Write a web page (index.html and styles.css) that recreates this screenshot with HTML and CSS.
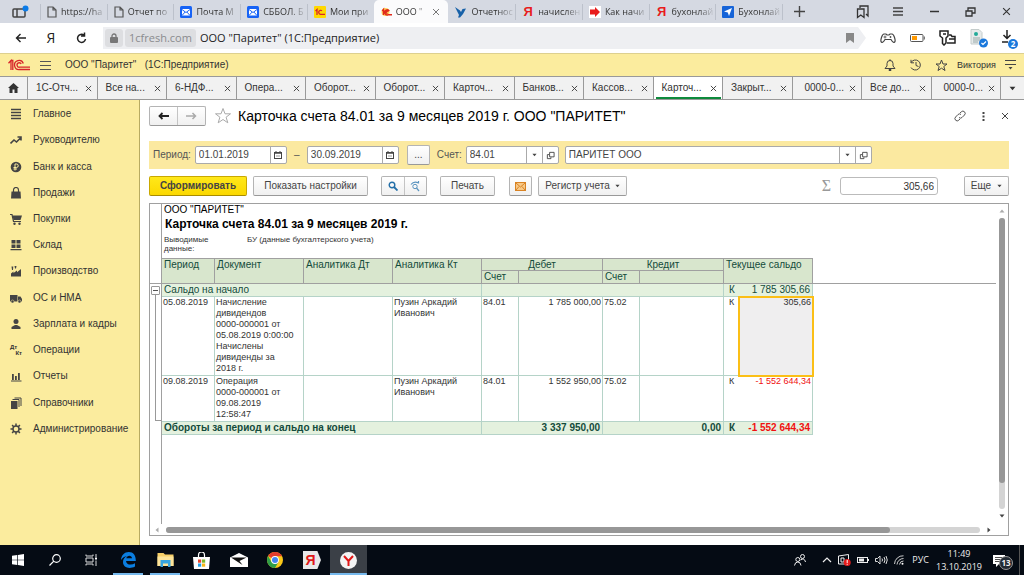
FILE: index.html
```html
<!DOCTYPE html>
<html lang="ru">
<head>
<meta charset="utf-8">
<title>ООО "Паритет" (1С:Предприятие)</title>
<link rel="stylesheet" href="styles.css">
</head>
<body>
<svg class="defs" aria-hidden="true">
  <symbol id="i-doc" viewBox="0 0 10 12"><path d="M1 1h5l3 3v7H1zM6 1v3h3" fill="none" stroke="#555" stroke-width="1.2"/></symbol>
  <symbol id="i-mail" viewBox="0 0 12 12"><rect width="12" height="12" rx="1.5" fill="#1763f6"/><rect x="2" y="3" width="8" height="6.5" fill="#fff"/><path d="M2 3.500l4 3 4-3M2 9.500l3-3.400M10 9.500L7 6.100" fill="none" stroke="#1763f6"/></symbol>
  <symbol id="i-1c" viewBox="0 0 22 12"><g fill="none" stroke="#d8232a" stroke-width="1.300"><path d="M0.500 4.200L3 1.500V11M2.800 1.500h2V11"/><path d="M15.300 4.500A4.500 4.500 0 1 0 11.500 10.500H22"/><path d="M13.200 5A2.200 2.200 0 1 0 11.500 8.200H22"/></g></symbol>
  <symbol id="i-x" viewBox="0 0 8 8"><path d="M1 1l6 6M7 1L1 7" fill="none" stroke="currentColor"/></symbol>
  <symbol id="i-down" viewBox="0 0 6 4"><path d="M0.500 0.500h5L3 3.500z" fill="currentColor"/></symbol>
  <symbol id="i-star" viewBox="0 0 18 18"><path d="M9 1.500l2 5.300h5.500l-4.400 3.400 1.700 5.600L9 12.500l-4.800 3.300 1.700-5.600L1.500 6.800H7z" fill="none" stroke="currentColor"/></symbol>
  <symbol id="i-cal" viewBox="0 0 8 8"><rect x=".5" y="1.500" width="7" height="6" fill="none" stroke="#444"/><path d="M0 2h8" stroke="#444" stroke-width="1.500"/><path d="M2 0v2M6 0v2" stroke="#444"/><path d="M2 5h4" stroke="#999"/></symbol>
  <symbol id="i-open" viewBox="0 0 10 10"><path d="M4 1.500h5v5H4zM3.500 4H1.500v4.500h4V7" fill="none" stroke="#444"/></symbol>
</svg>

<nav class="browser-tabs" aria-label="Вкладки браузера">
  <button class="panel-btn" aria-label="Табло"><svg width="17" height="14" viewBox="0 0 17 14"><rect x="1" y="4" width="12" height="8" rx="1" fill="none" stroke="#444" stroke-width="1.500"/><path d="M5 4v8" stroke="#444" stroke-width="1.500"/><circle cx="13.500" cy="3.500" r="3" fill="#0a7be8"/></svg></button>
  <div class="tab-strip">
    <button class="btab"><svg width="10" height="12"><use href="#i-doc"/></svg><span>https://ha</span></button>
    <button class="btab"><svg width="10" height="12"><use href="#i-doc"/></svg><span>Отчет по</span></button>
    <button class="btab"><svg width="12" height="12"><use href="#i-mail"/></svg><span>Почта М</span></button>
    <button class="btab"><svg width="12" height="12"><use href="#i-mail"/></svg><span>СББОЛ. Б</span></button>
    <button class="btab"><svg width="12" height="12" viewBox="0 0 12 12"><rect width="12" height="12" rx="1" fill="#ffd800"/><path d="M1.500 5l1.500-1.500V9M8 4.800A2 2 0 1 0 7 8.300h4" fill="none" stroke="#d8232a" stroke-width="1.300"/></svg><span>Мои при</span></button>
    <button class="btab active"><svg width="11" height="10" viewBox="0 0 11 10"><circle cx="4.500" cy="5" r="4" fill="#ffd45a"/><path d="M1.200 4l1.300-1.500V8M8.300 4A2.500 2.500 0 1 0 7 7.800h4M7 4.800a1 1 0 1 0-.5 1.300" fill="none" stroke="#e02a1c" stroke-width="1.400"/></svg><span>ООО "</span><svg class="close" width="8" height="8"><use href="#i-x"/></svg></button>
    <button class="btab"><svg width="12" height="12" viewBox="0 0 12 12"><path d="M0 1l5 3.500L6 6l1.500-3L11 2.500 8 8l-3 3.500H3L4 9z" fill="#1761a8"/></svg><span>Отчетнос</span></button>
    <button class="btab"><b class="ya">Я</b><span>начислен</span></button>
    <button class="btab"><svg width="12" height="12" viewBox="0 0 12 12"><rect width="12" height="12" fill="#fff"/><path d="M1 3.500h5V1l5 5-5 5V8.500H1z" fill="#e81c1c"/></svg><span>Как начи</span></button>
    <button class="btab"><b class="ya">Я</b><span>бухонлай</span></button>
    <button class="btab"><svg width="12" height="12" viewBox="0 0 12 12"><rect width="12" height="12" rx="1" fill="#1664d8"/><path d="M2 5.500L10 2 7 10 5.800 6.500z" fill="#fff"/></svg><span>Бухонлай</span></button>
    <button class="new-tab" aria-label="Новая вкладка"><svg width="11" height="11" viewBox="0 0 11 11"><path d="M5.500 0v11M0 5.500h11" stroke="#444" stroke-width="1.400"/></svg></button>
  </div>
  <div class="window-btns">
    <button aria-label="Закладки"><svg width="13" height="14" viewBox="0 0 13 14"><path d="M4 3V1h8v10l-2-2M1.500 4h6.500v8.500L4.800 10l-3.300 2.500z" fill="none" stroke="#333" stroke-width="1.300"/></svg></button>
    <button aria-label="Меню"><svg width="10" height="9" viewBox="0 0 10 9"><path d="M0 1h10M0 4.500h10M0 8h10" stroke="#444" stroke-width="1.600"/></svg></button>
    <button aria-label="Свернуть"><svg width="9" height="3" viewBox="0 0 9 3"><path d="M0 1.500h9" stroke="#333" stroke-width="1.500"/></svg></button>
    <button aria-label="Развернуть"><svg width="11" height="10" viewBox="0 0 11 10"><path d="M1 4h6v5H1zM3 4V1h7v5H7" fill="none" stroke="#333" stroke-width="1.300"/></svg></button>
    <button aria-label="Закрыть"><svg width="9" height="9"><use href="#i-x"/></svg></button>
  </div>
</nav>

<div class="address-bar">
  <button class="nav-btn" aria-label="Назад"><svg width="12" height="10" viewBox="0 0 12 10"><path d="M11 5H1.500M5.500 1l-4 4 4 4" fill="none" stroke="#222" stroke-width="1.400"/></svg></button>
  <button class="nav-btn ya-home">Я</button>
  <button class="nav-btn" aria-label="Обновить"><svg width="11" height="12" viewBox="0 0 11 12"><path d="M9.500 7A4 4 0 1 1 8 3.200M8.500 0.500v3.500H5" fill="none" stroke="#222" stroke-width="1.500"/></svg></button>
  <div class="omnibox">
    <span class="chip lock"><svg width="8" height="10" viewBox="0 0 8 10"><rect y="4" width="8" height="6" rx="1" fill="#777"/><path d="M2 4.500V3a2 2 0 0 1 4 0v1.500" fill="none" stroke="#777" stroke-width="1.300"/></svg></span>
    <span class="chip">1cfresh.com</span>
    <span class="page-title">ООО "Паритет" (1С:Предприятие)</span>
    <svg class="bookmark" width="8" height="10" viewBox="0 0 8 10"><path d="M0 0h8v10L4 7 0 10z" fill="#888"/></svg>
  </div>
  <div class="extensions">
    <svg width="16" height="12" viewBox="0 0 16 12"><path d="M4 2h2l1 1h2l1-1h2c2 0 3.500 6 3 7.500s-2 1-3-.5l-1-1.500H5L4 9c-1 1.500-2.500 2-3 .5S2 2 4 2z" fill="none" stroke="#444" stroke-width="1.200"/><path d="M3.500 5h3M5 3.500v3M10.500 4v2M9.500 5h2" stroke="#444" stroke-width=".8"/></svg>
    <svg width="15" height="8" viewBox="0 0 15 8"><rect x=".5" y=".5" width="12.500" height="7" rx="1" fill="#fff" stroke="#555"/><rect x="2" y="2" width="5" height="4" fill="#f90"/><path d="M14.300 2.500v3" stroke="#555"/></svg>
    <svg width="17" height="16" viewBox="0 0 17 16"><path d="M1 1h8v5L7 8v5l-2 2-1.500-1.500V8L1 6zM4 4h3M10 5h2l1 1.500h3V13H8M10 9h6" fill="none" stroke="#222" stroke-width="1.500"/></svg>
    <svg width="18" height="19" viewBox="0 0 18 19"><path d="M1 .5h8l3 3V15H1z" fill="#e6eaea" stroke="#c4cccc"/><circle cx="6" cy="5" r="2" fill="#2a9"/><path d="M3 9h7M3 11h7M3 13h5" stroke="#9aa"/><circle cx="13.500" cy="14" r="4.500" fill="#1a78dc"/><path d="M11.500 14l1.500 1.500 3-3" fill="none" stroke="#fff" stroke-width="1.200"/></svg>
    <span class="downloads"><svg width="10" height="13" viewBox="0 0 10 13"><path d="M5 0v8M1.500 5L5 8.500 8.500 5M0 12h6" fill="none" stroke="#222" stroke-width="1.500"/></svg><b>2</b></span>
  </div>
</div>

<header class="app-header">
  <svg width="22" height="12"><use href="#i-1c"/></svg>
  <button class="burger" aria-label="Меню"><svg width="11" height="9" viewBox="0 0 11 9"><path d="M0 .5h11M0 4.500h11M0 8.500h11" stroke="#555"/></svg></button>
  <span class="app-name">ООО "Паритет"&nbsp;&nbsp; (1С:Предприятие)</span>
  <div class="app-tools">
    <svg width="12" height="12" viewBox="0 0 12 12"><path d="M1 9.500h10L9 7V4.500a3 3 0 0 0-6 0V7zM6 .3V2M5 10.500h2v1H5z" fill="none" stroke="#444"/></svg>
    <svg width="13" height="12" viewBox="0 0 13 12"><path d="M2 3.500A5 5 0 1 1 2 8.500M2 .8v3h3M7 3v3.500l2.500 1" fill="none" stroke="#444"/></svg>
    <svg class="dark" width="13" height="13" viewBox="0 0 13 13"><path d="M6.500 1l1.500 4h4L8.800 7.500 10 11.500 6.500 9.200 3 11.500l1.200-4L1 5h4z" fill="none" stroke="currentColor"/></svg>
    <span class="user">Виктория</span>
    <svg width="11" height="10" viewBox="0 0 11 10"><path d="M0 .5h11M0 4.500h11" stroke="#444"/><path d="M3.500 7h4L5.500 9.500z" fill="#444"/></svg>
  </div>
</header>

<nav class="app-tabs" aria-label="Открытые окна">
  <button class="home" aria-label="Начальная страница"><svg width="11" height="10" viewBox="0 0 11 10"><path d="M5.500 0L11 5H9.500v5h-3V6.500h-2V10h-3V5H0z" fill="#333"/></svg></button>
  <button class="atab"><span>1С-Отч...</span><svg width="7" height="7"><use href="#i-x"/></svg></button>
  <button class="atab"><span>Все на...</span><svg width="7" height="7"><use href="#i-x"/></svg></button>
  <button class="atab"><span>6-НДФ...</span><svg width="7" height="7"><use href="#i-x"/></svg></button>
  <button class="atab"><span>Опера...</span><svg width="7" height="7"><use href="#i-x"/></svg></button>
  <button class="atab"><span>Оборот...</span><svg width="7" height="7"><use href="#i-x"/></svg></button>
  <button class="atab"><span>Оборот...</span><svg width="7" height="7"><use href="#i-x"/></svg></button>
  <button class="atab"><span>Карточ...</span><svg width="7" height="7"><use href="#i-x"/></svg></button>
  <button class="atab"><span>Банков...</span><svg width="7" height="7"><use href="#i-x"/></svg></button>
  <button class="atab"><span>Кассов...</span><svg width="7" height="7"><use href="#i-x"/></svg></button>
  <button class="atab current"><span>Карточ...</span><svg width="7" height="7"><use href="#i-x"/></svg></button>
  <button class="atab"><span>Закрыт...</span><svg width="7" height="7"><use href="#i-x"/></svg></button>
  <button class="atab end"><span>0000-0...</span><svg width="7" height="7"><use href="#i-x"/></svg></button>
  <button class="atab"><span>Все до...</span><svg width="7" height="7"><use href="#i-x"/></svg></button>
  <button class="atab end"><span>0000-0...</span><svg width="7" height="7"><use href="#i-x"/></svg></button>
  <button class="more" aria-label="Все вкладки"><svg width="7" height="5"><use href="#i-down"/></svg></button>
</nav>

<div class="workspace">
  <nav class="sidebar" aria-label="Разделы">
    <a href="#"><svg width="12" height="12" viewBox="0 0 12 12"><path d="M1 1.500h10M1 4.500h10M1 7.500h10M1 10.500h10" stroke="#444" stroke-width="1.400"/></svg>Главное</a>
    <a href="#"><svg width="12" height="12" viewBox="0 0 12 12"><path d="M.5 9.500L4 6l2.500 2L11 3.500M7.500 3H11v3.500" fill="none" stroke="#444" stroke-width="1.600"/></svg>Руководителю</a>
    <a href="#"><svg width="12" height="12" viewBox="0 0 12 12"><circle cx="6" cy="6" r="5.300" fill="#444"/><path d="M5 9.500V3h1.500a1.500 1.500 0 0 1 0 3.500H3.500M3.500 8h3.500" fill="none" stroke="#fbec9e"/></svg>Банк и касса</a>
    <a href="#"><svg width="12" height="12" viewBox="0 0 12 12"><path d="M1.500 4.500h9l.5 7H1z" fill="#444"/><path d="M3.500 6V3a2.500 2.500 0 0 1 5 0v3" fill="none" stroke="#444" stroke-width="1.200"/></svg>Продажи</a>
    <a href="#"><svg width="12" height="12" viewBox="0 0 12 12"><path d="M0 1.500h2l1.500 7H11" fill="none" stroke="#444" stroke-width="1.200"/><path d="M2.500 2.500H12L10.500 7h-7z" fill="#444"/><circle cx="4.500" cy="10.800" r="1.200" fill="#444"/><circle cx="9.500" cy="10.800" r="1.200" fill="#444"/></svg>Покупки</a>
    <a href="#"><svg width="12" height="12" viewBox="0 0 12 12"><path d="M1.500 1h4v3.500h-4zM6.500 1h4v3.500h-4zM1.500 5.500h4V9h-4zM6.500 5.500h4V9h-4zM.5 10h11v1.300H.5z" fill="#444"/></svg>Склад</a>
    <a href="#"><svg width="12" height="12" viewBox="0 0 12 12"><path d="M1 11.500V8.500l2.500-2V8L7 5.500v1.800L11 4v7.500zM1.500 1.500h1.800L3 5H2zM4.500 1h2l-.5 2.500H5z" fill="#444"/></svg>Производство</a>
    <a href="#"><svg width="12" height="12" viewBox="0 0 12 12"><path d="M0 3h7.500v6.500H0zM8 4.500h2.500L12 7v2.500H8z" fill="#444"/><circle cx="2.500" cy="9.500" r="1.500" fill="#444" stroke="#fbec9e" stroke-width=".5"/><circle cx="9.500" cy="9.500" r="1.500" fill="#444" stroke="#fbec9e" stroke-width=".5"/></svg>ОС и НМА</a>
    <a href="#"><svg width="12" height="12" viewBox="0 0 12 12"><circle cx="6" cy="3.500" r="2.500" fill="#444"/><path d="M1.500 11V9L5 7h2l3.500 2v2z" fill="#444"/></svg>Зарплата и кадры</a>
    <a href="#"><span class="dtkt"><i>Дт</i><i>Кт</i></span>Операции</a>
    <a href="#"><svg width="12" height="12" viewBox="0 0 12 12"><path d="M2 4h1.800v6H2zM5 6h1.800v4H5zM8 3h1.800v7H8zM1 10.500h10.500v1H1z" fill="#444"/></svg>Отчеты</a>
    <a href="#"><svg width="12" height="12" viewBox="0 0 12 12"><path d="M1 4h6.500v8H1z" fill="#444"/><path d="M2.500 2.500H9V10M4.500 1H11v8" fill="none" stroke="#444"/></svg>Справочники</a>
    <a href="#"><svg width="12" height="12" viewBox="0 0 12 12"><circle cx="6" cy="6" r="3" fill="none" stroke="#444" stroke-width="1.400"/><path d="M6 .5V3M6 9v2.500M.5 6H3M9 6h2.500M2.100 2.100l1.700 1.700M8.200 8.200l1.700 1.700M9.900 2.100L8.200 3.800M3.800 8.200L2.100 9.900" stroke="#444" stroke-width="1.500"/></svg>Администрирование</a>
  </nav>

  <main class="content">
    <div class="title-row">
      <div class="btn-group nav-pair">
        <button aria-label="Назад"><svg width="11" height="8" viewBox="0 0 11 8"><path d="M11 4H2M4.500 1L1.500 4l3 3" fill="none" stroke="#222" stroke-width="1.800"/></svg></button>
        <button aria-label="Вперед"><svg width="11" height="8" viewBox="0 0 11 8"><path d="M0 4h9M6.500 1l3 3-3 3" fill="none" stroke="#aaa" stroke-width="1.500"/></svg></button>
      </div>
      <svg class="fav" width="18" height="18"><use href="#i-star"/></svg>
      <h1>Карточка счета 84.01 за 9 месяцев 2019 г. ООО "ПАРИТЕТ"</h1>
      <div class="title-tools">
        <button aria-label="Получить ссылку"><svg width="12" height="12" viewBox="0 0 12 12"><path d="M5 7.500a2.200 2.200 0 0 0 3 0l2.500-2.500a2.200 2.200 0 0 0-3.200-3.200L6 3M7 4.500a2.200 2.200 0 0 0-3 0L1.600 7a2.200 2.200 0 0 0 3.200 3.200L6 9" fill="none" stroke="#555"/></svg></button>
        <button aria-label="Еще"><svg width="3" height="9" viewBox="0 0 3 9"><path d="M.5 0h2v2h-2zM.5 3.500h2v2h-2zM.5 7h2v2h-2z" fill="#444"/></svg></button>
        <button aria-label="Закрыть"><svg width="8" height="8"><use href="#i-x"/></svg></button>
      </div>
    </div>

    <form class="filter">
      <label for="from">Период:</label>
      <span class="field date"><input id="from" value="01.01.2019"><button type="button" aria-label="Календарь"><svg width="8" height="8"><use href="#i-cal"/></svg></button></span>
      <label class="dash" for="to">–</label>
      <span class="field date"><input id="to" value="30.09.2019"><button type="button" aria-label="Календарь"><svg width="8" height="8"><use href="#i-cal"/></svg></button></span>
      <button type="button" class="btn dots">...</button>
      <label for="acc">Счет:</label>
      <span class="field account"><input id="acc" value="84.01"><button type="button" aria-label="Выбрать"><svg width="5" height="4"><use href="#i-down"/></svg></button><button type="button" aria-label="Открыть"><svg width="9" height="9"><use href="#i-open"/></svg></button></span>
      <span class="field org"><input aria-label="Организация" value="ПАРИТЕТ ООО"><button type="button" aria-label="Выбрать"><svg width="5" height="4"><use href="#i-down"/></svg></button><button type="button" aria-label="Открыть"><svg width="9" height="9"><use href="#i-open"/></svg></button></span>
    </form>

    <div class="toolbar">
      <button class="btn primary">Сформировать</button>
      <button class="btn settings">Показать настройки</button>
      <div class="btn-group find">
        <button aria-label="Найти"><svg width="10" height="10" viewBox="0 0 10 10"><circle cx="4" cy="4" r="2.800" fill="none" stroke="#236fa8" stroke-width="1.400"/><path d="M6 6l3.500 3.500" stroke="#236fa8" stroke-width="1.800"/></svg></button>
        <button aria-label="Найти далее"><svg width="11" height="11" viewBox="0 0 11 11"><circle cx="5" cy="5.500" r="2.200" fill="none" stroke="#5b95c0"/><path d="M6.500 7L9 10M1 3.500Q4-.5 8.500 2M8.500 0v2.500" fill="none" stroke="#5b95c0" stroke-width="1.200"/></svg></button>
      </div>
      <button class="btn print">Печать</button>
      <button class="btn mail" aria-label="Отправить"><svg width="11" height="9" viewBox="0 0 11 9"><rect x=".5" y=".5" width="10" height="8" fill="#f8c987" stroke="#d98324"/><path d="M1 1l4.500 4L10 1M1 8l3-3.500M10 8L7 4.500" fill="none" stroke="#d98324"/></svg></button>
      <button class="btn register">Регистр учета<svg width="5" height="4"><use href="#i-down"/></svg></button>
      <label class="sigma" for="sum">Σ</label>
      <input class="sum" id="sum" value="305,66">
      <button class="btn more-btn">Еще<svg width="5" height="4"><use href="#i-down"/></svg></button>
    </div>

    <section class="sheet">
      <div class="gutter">
        <div class="gutter-head"></div>
        <button class="collapse" aria-label="Свернуть группу"></button>
        <div class="bracket"></div>
      </div>
      <div class="page">
        <div class="doc-head">
          <p class="org-name">ООО "ПАРИТЕТ"</p>
          <h2>Карточка счета 84.01 за 9 месяцев 2019 г.</h2>
          <div class="meta"><span>Выводимые данные:</span><span>БУ (данные бухгалтерского учета)</span></div>
        </div>
        <div class="table-row">
          <table>
            <colgroup><col class="c-date"><col class="c-text"><col class="c-text"><col class="c-text"><col class="c-acc"><col class="c-sum"><col class="c-acc"><col class="c-sum"><col class="c-side"><col class="c-bal"></colgroup>
            <thead>
              <tr><th rowspan="2">Период</th><th rowspan="2">Документ</th><th rowspan="2">Аналитика Дт</th><th rowspan="2">Аналитика Кт</th><th class="mid" colspan="2">Дебет</th><th class="mid" colspan="2">Кредит</th><th colspan="2" rowspan="2">Текущее сальдо</th></tr>
              <tr class="sub"><th>Счет</th><th></th><th>Счет</th><th></th></tr>
            </thead>
            <tbody>
              <tr class="total"><td colspan="4">Сальдо на начало</td><td colspan="4"></td><td class="side">К</td><td class="num">1 785 305,66</td></tr>
              <tr class="entry first"><td>05.08.2019</td><td>Начисление<br>дивидендов<br>0000-000001 от<br>05.08.2019 0:00:00<br>Начислены<br>дивиденды за<br>2018 г.</td><td></td><td>Пузин Аркадий<br>Иванович</td><td>84.01</td><td class="num">1 785 000,00</td><td>75.02</td><td></td><td class="side">К</td><td class="num selected">305,66</td></tr>
              <tr class="entry second"><td>09.08.2019</td><td>Операция<br>0000-000001 от<br>09.08.2019<br>12:58:47</td><td></td><td>Пузин Аркадий<br>Иванович</td><td>84.01</td><td class="num">1 552 950,00</td><td>75.02</td><td></td><td class="side">К</td><td class="num neg">-1 552 644,34</td></tr>
              <tr class="total final"><td colspan="4">Обороты за период и сальдо на конец</td><td class="num" colspan="2">3 337 950,00</td><td class="num" colspan="2">0,00</td><td class="side">К</td><td class="num neg">-1 552 644,34</td></tr>
            </tbody>
          </table>
          <div class="freeze"></div>
        </div>
      </div>
      <div class="vscroll"><svg width="6" height="4" viewBox="0 0 6 4"><path d="M0.500 3.500h5L3 0.500z" fill="#aaa"/></svg><div class="track"><div class="thumb"></div></div><svg width="6" height="4"><use href="#i-down"/></svg></div>
      <div class="hscroll"><svg width="4" height="6" viewBox="0 0 4 6"><path d="M3.500 .5v5L.5 3z" fill="#aaa"/></svg><div class="track"><div class="thumb"></div></div><svg width="4" height="6" viewBox="0 0 4 6"><path d="M.5 .5v5L3.500 3z" fill="#444"/></svg></div>
    </section>
  </main>
</div>

<footer class="taskbar">
  <div class="launchers">
    <button aria-label="Пуск"><svg width="12" height="12" viewBox="0 0 12 12"><path d="M0 1.700L5.300 1v4.700H0zM6 .9L12 0v5.700H6zM0 6.300h5.300V11L0 10.300zM6 6.300h6V12l-6-.9z" fill="#fff"/></svg></button>
    <button aria-label="Поиск"><svg width="12" height="12" viewBox="0 0 12 12"><circle cx="7.500" cy="4.500" r="3.800" fill="none" stroke="#fff" stroke-width="1.200"/><path d="M4.800 7.200L.5 11.500" stroke="#fff" stroke-width="1.200"/></svg></button>
    <button aria-label="Представление задач"><svg width="13" height="12" viewBox="0 0 13 12"><path d="M1 .5v1.500h7V.5M1 4h7v4H1zM1 11.500V10h7v1.500M11 0v3M11 6.500V12" fill="none" stroke="#ddd"/><path d="M10 3.500h2v2h-2z" fill="#fff"/></svg></button>
    <button class="open" aria-label="Edge"><svg width="15" height="16" viewBox="0 0 15 16"><path d="M0 8C.3 3 3.500 0 7.800 0 12.500 0 15 3.500 14.800 9H5c.2 4 5.500 4.500 9 2.300v3.200C8.500 17.500 2 15.800 2 10c0-2.800 1.500-4.800 4-6C3.500 4.500 1.500 5.800 0 8zM5.300 6.300H11C11 2.800 5.800 2.900 5.300 6.300z" fill="#0b7ee0"/></svg></button>
    <button class="open" aria-label="Проводник"><svg width="17" height="14" viewBox="0 0 17 14"><path d="M.5 0h6L8 1.500h8.500V13H.5z" fill="#f7cf68"/><path d="M.5 3.500h16V13H.5z" fill="#fde49a"/><path d="M3.500 7h10v7H11v-3.500H6V14H3.500z" fill="#38a5e0"/></svg></button>
    <button aria-label="Магазин"><svg width="17" height="17" viewBox="0 0 17 17"><path d="M5.500 6V3a3 3 0 0 1 6 0v3" fill="none" stroke="#fff" stroke-width="1.200"/><path d="M0 5h17l-1 12H1z" fill="#fff"/><path d="M5 7.500h3.200v3.200H5z" fill="#e8452c"/><path d="M9 7.500h3.200v3.200H9z" fill="#7db82c"/><path d="M5 11.500h3.200v3.200H5z" fill="#21a0e8"/><path d="M9 11.500h3.200v3.200H9z" fill="#fbb81a"/></svg></button>
    <button aria-label="Почта"><svg width="18" height="14" viewBox="0 0 18 14"><path d="M0 4.500L9 0l9 4.500V14H0z" fill="#fff"/><path d="M1 4.500h15.500L9.500 8l3 4L1 4.500z" fill="#111"/></svg></button>
    <button aria-label="Chrome"><svg width="16" height="16" viewBox="0 0 16 16"><circle cx="8" cy="8" r="8" fill="#fbc818"/><path d="M8 8L1.100 4A8 8 0 0 1 15 4.200H8z" fill="#e23d2e"/><path d="M1.100 4A8 8 0 0 0 8 16l3.500-6L8 8 4.500 10z" fill="#2f9e48"/><circle cx="8" cy="8" r="3.900" fill="#fff"/><circle cx="8" cy="8" r="3" fill="#4285f0"/></svg></button>
    <button class="yandex" aria-label="Яндекс"><span>Я</span></button>
    <button class="open focused" aria-label="Яндекс.Браузер"><svg width="17" height="17" viewBox="0 0 17 17"><circle cx="8.500" cy="8.500" r="8.500" fill="#f4f4f4"/><path d="M4 4l4.500 5L13 4M8.500 8.500V14" fill="none" stroke="#e01818" stroke-width="2"/></svg></button>
  </div>
  <div class="tray">
    <svg class="people" width="12" height="12" viewBox="0 0 12 12"><g fill="none" stroke="#eee"><circle cx="3.800" cy="5.500" r="2"/><path d="M.5 11.500Q1 8 3.800 8T7 11.500"/><circle cx="8.500" cy="2.500" r="2"/><path d="M6.500 6Q10.500 3.500 11.500 8"/></g></svg>
    <svg width="10" height="6" viewBox="0 0 10 6"><path d="M1 5l4-4 4 4" fill="none" stroke="#eee" stroke-width="1.200"/></svg>
    <svg width="13" height="12" viewBox="0 0 13 12"><path d="M.5 2L10.500.5v9.500h-10zM3 4h3v4H3z" fill="none" stroke="#eee"/><circle cx="9.200" cy="8.500" r="3.500" fill="#e81c1c"/><path d="M9.200 6v3M9.200 9.800v1" stroke="#fff"/></svg>
    <svg width="12" height="6" viewBox="0 0 12 6"><rect x=".5" y=".5" width="10" height="5" fill="none" stroke="#eee"/><path d="M2 1.500h5v3H2zM11 2h1v2h-1z" fill="#eee"/></svg>
    <svg width="13" height="10" viewBox="0 0 13 10"><path d="M.5 3.500h2L5 1v8L2.500 6.500h-2zM7 3.500q1 1.500 0 3M9 2q2 3 0 6M11 1q2.500 4 0 8" fill="none" stroke="#ddd"/></svg>
    <svg width="10" height="10" viewBox="0 0 10 10"><path d="M.5 9A8.500 8.500 0 0 1 9.500.8M3 9.500A6.500 6.500 0 0 1 9.500 3.500M5.500 9.500a4 4 0 0 1 4-3.500" fill="none" stroke="#ccc"/><circle cx="8.500" cy="8.700" r="1" fill="#fff"/></svg>
    <span class="lang">РУС</span>
    <time>11:49<br>13.10.2019</time>
    <button class="notes" aria-label="Уведомления"><svg width="12" height="12" viewBox="0 0 12 12"><path d="M0 0h12v9H6l-3 3V9H0z" fill="#fff"/><path d="M2 2.500h8M2 4.500h8M2 6.500h5" stroke="#222" stroke-width=".8"/></svg><b>13</b></button>
  </div>
</footer>
</body>
</html>
```

FILE: styles.css
```css
* { box-sizing: border-box; }
body {
  margin: 0;
  min-height: 100vh;
  display: flex;
  flex-direction: column;
  background: #fff;
  color: #333;
  font: 10px/12px "Liberation Sans", Arial, sans-serif;
}
button, input {
  margin: 0;
  padding: 0;
  border: 0;
  background: none;
  color: inherit;
  font: inherit;
}
h1, h2, p { margin: 0; }
svg { display: block; flex: none; }
.defs { position: absolute; width: 0; height: 0; }

/* Browser tabs */
.browser-tabs {
  display: flex;
  height: 23px;
  background: #d5d9e2;
  font: 9px/14px "Open Sans", "Noto Sans", sans-serif;
}
.panel-btn { width: 40px; display: flex; align-items: center; justify-content: center; }
.tab-strip { display: flex; flex: 0 1 776px; min-width: 0; }
.btab {
  flex: 1 1 0;
  min-width: 0;
  display: flex;
  align-items: center;
  gap: 4px;
  padding: 0 0 0 7px;
  background: linear-gradient(#bcc1cb, #bcc1cb) left center / 1px 16px no-repeat;
}
.btab span {
  flex: 1;
  min-width: 0;
  overflow: hidden;
  white-space: nowrap;
  text-align: left;
  -webkit-mask-image: linear-gradient(90deg, #000 60%, transparent);
  mask-image: linear-gradient(90deg, #000 60%, transparent);
}
.btab.active { padding-right: 8px; background: #fbfbfc; border-radius: 5px 5px 0 0; }
.btab.active + .btab { background: none; }
.close { color: #777; }
.ya { color: #e81c1c; font: bold 13px/14px "Liberation Sans", Arial, sans-serif; width: 12px; }
.new-tab { flex: 0 0 34px; display: flex; align-items: center; justify-content: center; background: linear-gradient(#bcc1cb, #bcc1cb) left center / 1px 16px no-repeat; }
.window-btns { display: flex; margin-left: auto; }
.window-btns button { width: 36px; display: flex; align-items: center; justify-content: center; color: #333; }

/* Address bar */
.address-bar {
  display: flex;
  align-items: center;
  height: 30px;
  padding: 0 8px 0 6px;
  font: 11px/18px "Open Sans", "Noto Sans", sans-serif;
  color: #222;
}
.nav-btn { width: 30px; display: flex; align-items: center; justify-content: center; }
.ya-home { font-size: 14px; }
.omnibox {
  flex: 1;
  display: flex;
  align-items: center;
  gap: 2px;
  height: 22px;
  margin-left: 7px;
  padding: 0 12px 0 2px;
  background: #eeeff2;
  clip-path: polygon(0 0, calc(100% - 8px) 0, 100% 50%, calc(100% - 8px) 100%, 0 100%);
}
.chip { padding: 0 4px; border-radius: 3px; background: #dddee1; color: #8a8b8e; }
.lock { display: flex; align-items: center; height: 18px; padding: 0 5px; }
.page-title { flex: 1; padding-left: 2px; }
.extensions { display: flex; align-items: center; gap: 14px; margin-left: 14px; }
.downloads { position: relative; width: 14px; height: 16px; }
.downloads b {
  position: absolute;
  left: 6px;
  top: 9px;
  width: 10px;
  height: 10px;
  border-radius: 5px;
  background: #1a78dc;
  color: #fff;
  font-size: 8px;
  line-height: 10px;
  text-align: center;
}

/* Application header */
.app-header {
  display: flex;
  align-items: center;
  height: 23px;
  padding: 0 8px;
  border-top: 1px solid #ddd090;
  background: #fbec9e;
}
.burger { margin: 0 14px 0 10px; }
.app-tools { display: flex; align-items: center; gap: 13px; margin-left: auto; }
.user { font-size: 9px; margin: 0 -4px 0 -4px; }
.dark { color: #444; }

.app-tabs {
  display: flex;
  height: 24px;
  border-top: 1px solid #999;
  border-bottom: 1px solid #999;
  background: #f1f1f1;
}
.home { width: 27px; display: flex; align-items: center; justify-content: center; }
.atab {
  flex: 1 1 60px;
  min-width: 0;
  display: flex;
  align-items: center;
  justify-content: space-between;
  padding: 0 5px 0 8px;
  border-left: 1px solid #999;
  white-space: nowrap;
}
.atab.end { padding-left: 12px; }
.atab.current { background: linear-gradient(#0e8a3c, #0e8a3c) 2px 100% / calc(100% - 3px) 2px no-repeat, #fff; }
.more { width: 24px; display: flex; align-items: center; justify-content: center; border-left: 1px solid #999; }

/* Workspace */
.workspace { flex: 1; display: flex; }
.sidebar {
  flex: none;
  width: 140px;
  display: grid;
  grid-auto-rows: 1fr;
  align-self: stretch;
  padding: 1px 0 103px;
  border-right: 1px solid #b8ab62;
  background: #fbec9e;
}
.sidebar a {
  display: flex;
  align-items: center;
  gap: 11px;
  padding-left: 10px;
  color: #333;
  text-decoration: none;
}
.dtkt { width: 12px; display: flex; flex-direction: column; font: bold 6px/6px "Liberation Sans", Arial, sans-serif; }
.dtkt i { font-style: normal; }
.dtkt i + i { text-align: right; }

.content {
  flex: 1;
  min-width: 0;
  display: flex;
  flex-direction: column;
  padding: 6px 15px 9px 9px;
}
.title-row { display: flex; align-items: center; height: 20px; }
.btn-group { display: flex; height: 20px; border: 1px solid #b4b4b4; border-bottom-color: #999; border-radius: 2px; background: linear-gradient(#fff, #f0f0f0); }
.btn-group button { flex: 1; display: flex; align-items: center; justify-content: center; }
.btn-group button + button { border-left: 1px solid #c4c4c4; }
.nav-pair { width: 57px; }
.fav { margin: 0 6px 0 8px; color: #aaa; }
h1 { color: #000; font-size: 14px; font-weight: 400; line-height: 18px; }
.title-tools { display: flex; align-items: center; gap: 16px; margin-left: auto; color: #444; }

.filter {
  display: flex;
  align-items: center;
  height: 28px;
  margin-top: 15px;
  padding: 0 4px;
  background: #fbe9a0;
  color: #555;
}
.field { display: flex; height: 18px; border: 1px solid #aaa; border-radius: 2px; background: #fff; color: #444; }
.field input { flex: 1; min-width: 0; padding: 0 3px; }
.field button { width: 16px; display: flex; align-items: center; justify-content: center; border-left: 1px solid #aaa; }
.filter label { margin-right: 4px; }
.date { width: 92px; }
.filter .dash { width: 20px; margin: 0; text-align: center; }
.account { width: 93px; }
.org { flex: 0 1 307px; margin-left: 6px; }
.btn {
  height: 20px;
  border: 1px solid #b4b4b4;
  border-bottom-color: #999;
  border-radius: 2px;
  background: linear-gradient(#fff, #f0f0f0);
  color: #444;
  white-space: nowrap;
}
.dots { width: 23px; margin: 0 7px 0 8px; }

.toolbar { display: flex; align-items: center; margin-top: 7px; }
.primary { width: 98px; border-color: #c9a800; border-bottom-color: #a88c00; background: linear-gradient(#ffe81a, #fbd800); color: #444; font-weight: 700; }
.settings { width: 115px; margin-left: 6px; }
.find { width: 46px; margin-left: 13px; }
.print { width: 55px; margin-left: 13px; }
.mail { width: 23px; margin-left: 14px; display: flex; align-items: center; justify-content: center; }
.register { width: 89px; margin-left: 6px; display: flex; align-items: center; justify-content: center; gap: 5px; }
.sigma { margin: 0 9px 0 auto; color: #999; font: 16px/18px "Liberation Serif", serif; }
.sum { width: 98px; height: 18px; padding: 0 3px; border: 1px solid #bbb; border-radius: 3px; text-align: right; }
.more-btn { width: 45px; margin-left: 26px; display: flex; align-items: center; justify-content: center; gap: 6px; }

/* Report */
.sheet {
  flex: 1;
  display: grid;
  grid-template: 1fr 11px / 12px 1fr 12px;
  margin-top: 7px;
  border: 1px solid #a0a0a0;
}
.gutter { display: flex; flex-direction: column; border-right: 1px solid #a0a0a0; }
.gutter-head { height: 80px; border-bottom: 1px solid #a0a0a0; }
.collapse {
  width: 9px;
  height: 9px;
  margin: 2px 0 0 1px;
  border: 1px solid #999;
  border-radius: 1px;
  background: linear-gradient(#555, #555) center / 5px 1px no-repeat;
}
.bracket { height: 126px; margin-left: 5px; border: solid #999; border-width: 0 0 1px 1px; }
.page { min-width: 0; color: #000; }
.doc-head { height: 54px; padding-left: 2px; }
h2 { padding-left: 1px; font-size: 12px; line-height: 17px; }
.meta { display: flex; color: #333; font-size: 8px; line-height: 9px; padding-top: 2px; }
.meta span:first-child { width: 83px; padding-right: 30px; }
.table-row { display: flex; align-items: flex-start; }
.freeze { flex: 1; height: 26px; border-bottom: 1px solid #a0a0a0; }
table {
  width: 651px;
  flex: none;
  table-layout: fixed;
  border-collapse: separate;
  border-spacing: 0;
  border-top: 1px solid #a0a0a0;
  line-height: 11px;
}
.c-date { width: 53px; }
.c-text { width: 89px; }
.c-acc { width: 37px; }
.c-sum { width: 84px; }
.c-side { width: 15px; }
.c-bal { width: 74px; }
th, td { height: 13px; padding: 0 2px; border: solid #b5d3c8; border-width: 0 1px 1px 0; text-align: left; vertical-align: top; }
th { height: 12px; border-color: #a0a0a0; background: #d8e6cd; color: #134b3b; font-weight: 400; }
th[rowspan] { line-height: 12px; }
.sub th { height: 13px; line-height: 12px; }
.mid { text-align: center; }
.total td { background: #e4f1de; color: #134b3b; line-height: 12px; }
.final { font-weight: 700; }
.entry td { padding: 0 1px; color: #333; font-size: 9px; white-space: nowrap; }
.first td { height: 79px; }
.second td { height: 46px; }
.total .side, .entry .side { padding-left: 5px; border-right: 0; }
.num, .entry .num { text-align: right; }
.total .neg, .entry .neg { color: #f01010; }
.entry .selected { background: #efeeef; outline: 2px solid #fbbf16; outline-offset: -1px; }

.vscroll { display: flex; flex-direction: column; align-items: center; gap: 5px; padding: 5px 0 6px; color: #444; }
.track { flex: 1; border-radius: 3px; background: #d4d4d4; }
.thumb { border-radius: 3px; background: #979797; }
.vscroll .track { width: 6px; }
.vscroll .thumb { height: 91%; }
.hscroll { grid-column: 1 / 4; display: flex; align-items: center; gap: 7px; padding: 0 17px 0 5px; }
.hscroll .track { height: 6px; }
.hscroll .thumb { width: 89%; height: 6px; }

/* Taskbar */
.taskbar {
  display: flex;
  height: 30px;
  background: #050b14;
  color: #eee;
  font: 9px/14px "Open Sans", "Noto Sans", sans-serif;
}
.launchers { display: flex; flex: 0 1 367px; }
.launchers button { flex: 1; display: flex; align-items: center; justify-content: center; }
.open { background: linear-gradient(#76b9ed, #76b9ed) center bottom / 30px 2px no-repeat; }
.launchers .focused { background: linear-gradient(#76b9ed, #76b9ed) center bottom / 100% 2px no-repeat, #3b4047; }
.yandex span {
  width: 18px;
  height: 18px;
  padding-right: 3px;
  background: #e8e8e8;
  clip-path: polygon(0 0, 80% 0, 100% 50%, 80% 100%, 0 100%);
  color: #e01818;
  font: bold 14px/18px "Liberation Sans", Arial, sans-serif;
}
.tray { display: flex; align-items: center; gap: 6px; margin-left: auto; margin-right: 4px; border-right: 1px solid #555; }
.people { margin-right: 10px; }
.lang { margin-left: 2px; }
.tray time { width: 48px; text-align: center; line-height: 13px; }
.notes { position: relative; width: 30px; height: 20px; padding: 2px 0 0 4px; }
.notes b {
  position: absolute;
  left: 10px;
  top: 6px;
  width: 14px;
  height: 14px;
  border: 1px solid #999;
  border-radius: 7px;
  background: #222a33;
  font-size: 8px;
  line-height: 12px;
  text-align: center;
}
```
